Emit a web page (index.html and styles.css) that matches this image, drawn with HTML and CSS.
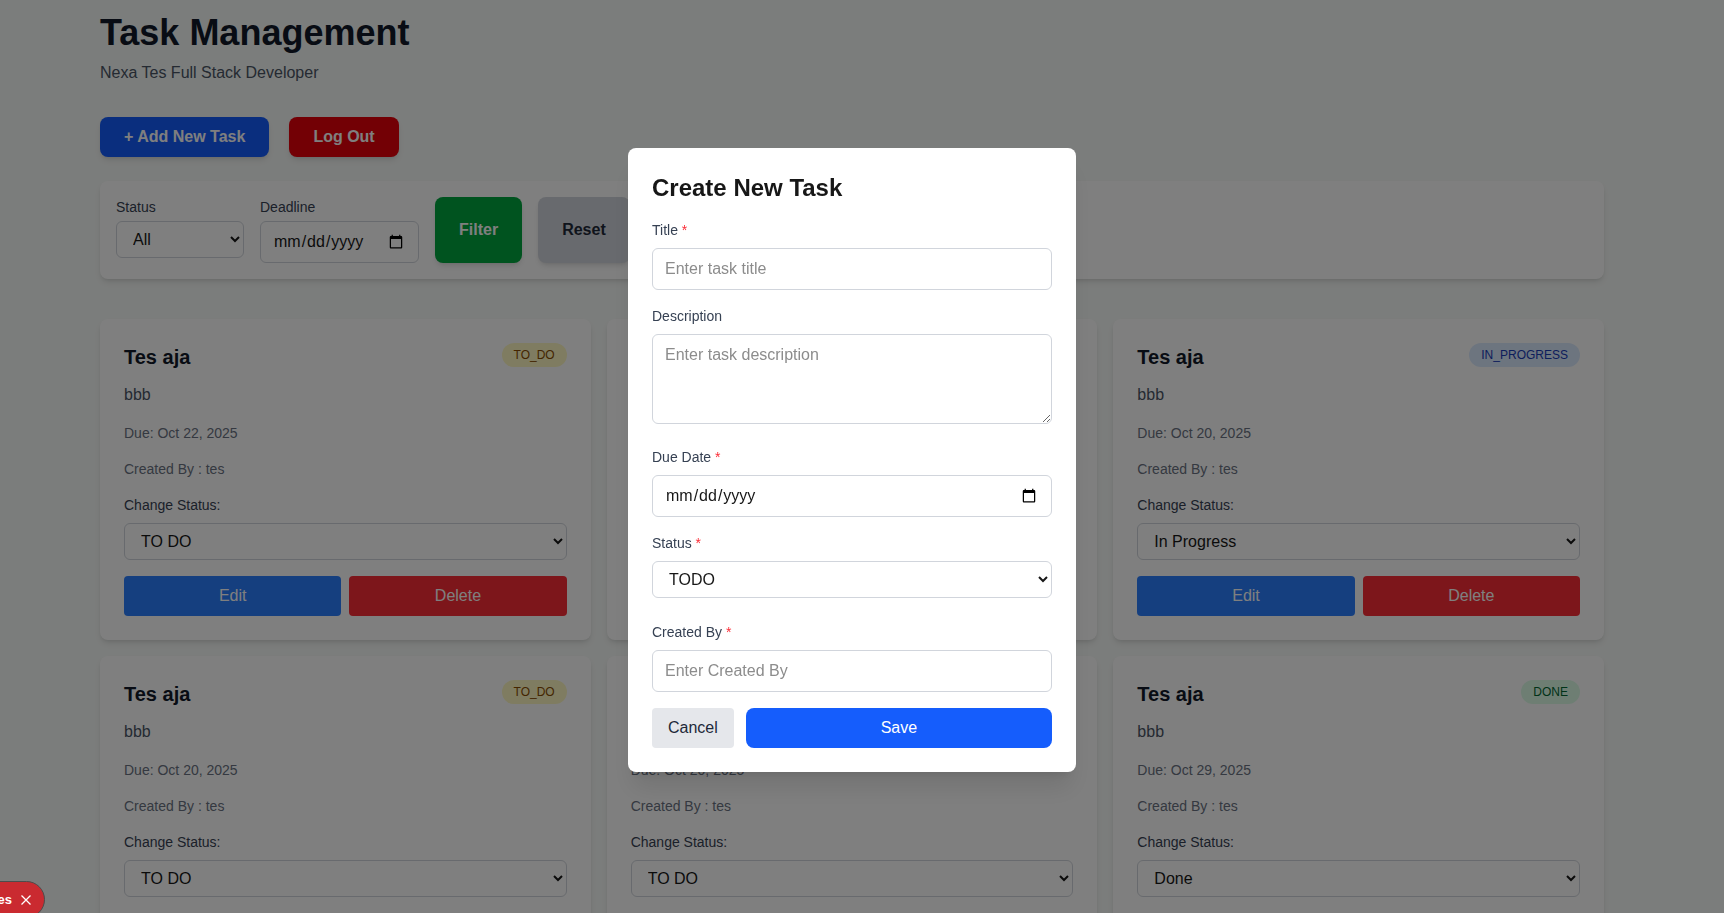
FILE: index.html
```html
<!DOCTYPE html>
<html lang="en">
<head>
<meta charset="utf-8">
<title>Task Management</title>
<link rel="stylesheet" href="styles.css">
</head>
<body>
<div class="page">
  <main class="container">
    <h1 class="page-title">Task Management</h1>
    <p class="page-subtitle">Nexa Tes Full Stack Developer</p>
    <div class="toolbar">
      <button type="button" class="btn btn-primary">+ Add New Task</button>
      <button type="button" class="btn btn-danger">Log Out</button>
    </div>
    <form class="filters">
      <div class="filter-field">
        <label for="f-status">Status</label>
        <select id="f-status" class="control select filter-select"><option>All</option><option>TO DO</option><option>In Progress</option><option>Done</option></select>
      </div>
      <div class="filter-field">
        <label for="f-deadline">Deadline</label>
        <input id="f-deadline" class="control filter-date" type="date">
      </div>
      <button type="button" class="btn btn-success">Filter</button>
      <button type="button" class="btn btn-neutral">Reset</button>
    </form>
    <section class="cards">
      <article class="card">
        <div class="card-head"><h2>Tes aja</h2><span class="badge badge-todo">TO_DO</span></div>
        <p class="card-text">bbb</p>
        <p class="card-meta">Due: Oct 22, 2025</p>
        <p class="card-meta">Created By : tes</p>
        <label class="card-label" for="s1">Change Status:</label>
        <select id="s1" class="control select"><option>TO DO</option><option>In Progress</option><option>Done</option></select>
        <div class="card-actions"><button type="button" class="action edit">Edit</button><button type="button" class="action delete">Delete</button></div>
      </article>
      <article class="card">
        <div class="card-head"><h2>Tes aja</h2><span class="badge badge-todo">TO_DO</span></div>
        <p class="card-text">bbb</p>
        <p class="card-meta">Due: Oct 20, 2025</p>
        <p class="card-meta">Created By : tes</p>
        <label class="card-label" for="s2">Change Status:</label>
        <select id="s2" class="control select"><option>TO DO</option><option>In Progress</option><option>Done</option></select>
        <div class="card-actions"><button type="button" class="action edit">Edit</button><button type="button" class="action delete">Delete</button></div>
      </article>
      <article class="card">
        <div class="card-head"><h2>Tes aja</h2><span class="badge badge-progress">IN_PROGRESS</span></div>
        <p class="card-text">bbb</p>
        <p class="card-meta">Due: Oct 20, 2025</p>
        <p class="card-meta">Created By : tes</p>
        <label class="card-label" for="s3">Change Status:</label>
        <select id="s3" class="control select"><option>TO DO</option><option selected>In Progress</option><option>Done</option></select>
        <div class="card-actions"><button type="button" class="action edit">Edit</button><button type="button" class="action delete">Delete</button></div>
      </article>
      <article class="card">
        <div class="card-head"><h2>Tes aja</h2><span class="badge badge-todo">TO_DO</span></div>
        <p class="card-text">bbb</p>
        <p class="card-meta">Due: Oct 20, 2025</p>
        <p class="card-meta">Created By : tes</p>
        <label class="card-label" for="s4">Change Status:</label>
        <select id="s4" class="control select"><option>TO DO</option><option>In Progress</option><option>Done</option></select>
        <div class="card-actions"><button type="button" class="action edit">Edit</button><button type="button" class="action delete">Delete</button></div>
      </article>
      <article class="card">
        <div class="card-head"><h2>Tes aja</h2><span class="badge badge-todo">TO_DO</span></div>
        <p class="card-text">bbb</p>
        <p class="card-meta">Due: Oct 20, 2025</p>
        <p class="card-meta">Created By : tes</p>
        <label class="card-label" for="s5">Change Status:</label>
        <select id="s5" class="control select"><option>TO DO</option><option>In Progress</option><option>Done</option></select>
        <div class="card-actions"><button type="button" class="action edit">Edit</button><button type="button" class="action delete">Delete</button></div>
      </article>
      <article class="card">
        <div class="card-head"><h2>Tes aja</h2><span class="badge badge-done">DONE</span></div>
        <p class="card-text">bbb</p>
        <p class="card-meta">Due: Oct 29, 2025</p>
        <p class="card-meta">Created By : tes</p>
        <label class="card-label" for="s6">Change Status:</label>
        <select id="s6" class="control select"><option>TO DO</option><option>In Progress</option><option selected>Done</option></select>
        <div class="card-actions"><button type="button" class="action edit">Edit</button><button type="button" class="action delete">Delete</button></div>
      </article>
    </section>
  </main>
</div>

<div class="overlay">
  <form class="modal" role="dialog" aria-labelledby="modal-title">
    <h2 id="modal-title" class="modal-title">Create New Task</h2>
    <div class="field">
      <label for="m-title">Title <span class="required">*</span></label>
      <input id="m-title" class="control" type="text" placeholder="Enter task title">
    </div>
    <div class="field">
      <label for="m-desc">Description</label>
      <textarea id="m-desc" class="control area" rows="3" placeholder="Enter task description"></textarea>
    </div>
    <div class="field">
      <label for="m-due">Due Date <span class="required">*</span></label>
      <input id="m-due" class="control" type="date">
    </div>
    <div class="field field-loose">
      <label for="m-status">Status <span class="required">*</span></label>
      <select id="m-status" class="control select"><option>TODO</option><option>IN PROGRESS</option><option>DONE</option></select>
    </div>
    <div class="field">
      <label for="m-by">Created By <span class="required">*</span></label>
      <input id="m-by" class="control" type="text" placeholder="Enter Created By">
    </div>
    <div class="modal-actions">
      <button type="button" class="cancel">Cancel</button>
      <button type="button" class="save">Save</button>
    </div>
  </form>
</div>

<div class="issues">
  <span>1 Issues</span>
  <button type="button" class="issues-close" aria-label="Close">
    <svg width="12" height="12" viewBox="0 0 12 12" fill="none" stroke="currentColor" stroke-width="1.3"><path d="M1.5 1.5l9 9M10.500 1.500l-9 9"/></svg>
  </button>
</div>
</body>
</html>
```
FILE: styles.css
```css
*, *::before, *::after { box-sizing: border-box; margin: 0; }
html, body { height: 100%; }
body {
  overflow: hidden;
  background: #f7faf8;
  color: #171717;
  font: 16px/24px Arial, "Liberation Sans", Helvetica, sans-serif;
}
button, input, select, textarea { font: inherit; color: inherit; }
button { border: 0; cursor: pointer; }

.page { height: 100%; overflow: hidden; padding-right: 20px; }
.container { max-width: 1536px; margin: 0 auto; padding: 13px 16px; }
.page-title { color: #101828; font-size: 36px; line-height: 40px; margin-bottom: 8px; }
.page-subtitle { color: #4a5565; }

.toolbar { display: flex; gap: 20px; margin: 32px 0 24px; }
.btn {
  padding: 8px 24px;
  border-radius: 8px;
  color: #fff;
  font-weight: 700;
  box-shadow: 0 4px 6px -1px rgba(0, 0, 0, .1), 0 2px 4px -2px rgba(0, 0, 0, .1);
}
.btn-primary { background: #155dfc; }
.btn-danger { background: #e7000b; }
.btn-success { background: #00a63e; }
.btn-neutral { background: #d1d5dc; color: #1e2939; }

.filters {
  display: flex;
  gap: 16px;
  padding: 16px;
  margin-bottom: 40px;
  background: #fff;
  border-radius: 8px;
  box-shadow: 0 4px 6px -1px rgba(0, 0, 0, .1), 0 2px 4px -2px rgba(0, 0, 0, .1);
}
.filters label { display: block; margin-bottom: 4px; font-size: 14px; line-height: 20px; color: #364153; }

.control {
  display: block;
  width: 100%;
  padding: 8px 12px;
  border: 1px solid #d1d5dc;
  border-radius: 6px;
  background: #fff;
}
input.control { height: 42px; }
.select { height: 37px; }
.filters .filter-select { width: 128px; }
.filters .filter-date { width: 159px; }
.control::placeholder { color: #8c8c8c; }

.cards { display: grid; grid-template-columns: repeat(3, 1fr); gap: 16px; }
.card {
  padding: 24px;
  background: #fff;
  border-radius: 8px;
  box-shadow: 0 4px 6px -1px rgba(0, 0, 0, .1), 0 2px 4px -2px rgba(0, 0, 0, .1);
}
.card-head { display: flex; justify-content: space-between; align-items: flex-start; margin-bottom: 12px; }
.card-head h2 { font-size: 20px; line-height: 28px; color: #101828; }
.badge { padding: 4px 12px; border-radius: 12px; font-size: 12px; line-height: 16px; }
.badge-todo { background: #fef9c2; color: #894b00; }
.badge-progress { background: #dbeafe; color: #193cb8; }
.badge-done { background: #dcfce7; color: #016630; }
.card-text { color: #4a5565; margin-bottom: 16px; }
.card-meta { font-size: 14px; line-height: 20px; color: #6a7282; margin-bottom: 16px; }
.card-label { display: block; font-size: 14px; line-height: 20px; color: #364153; margin-bottom: 8px; }
.card-actions { display: flex; gap: 8px; margin-top: 16px; }
.action { flex: 1; padding: 8px 16px; border-radius: 4px; color: #fff; }
.edit { background: #2b7fff; }
.delete { background: #fb2c36; }

.overlay {
  position: fixed;
  inset: 0;
  display: flex;
  align-items: center;
  justify-content: center;
  padding: 0 20px 0 0;
  background: rgba(0, 0, 0, .5);
}
.modal {
  width: 448px;
  padding: 24px;
  margin-top: 6px;
  background: #fff;
  border-radius: 8px;
  box-shadow: 0 20px 25px -5px rgba(0, 0, 0, .1), 0 8px 10px -6px rgba(0, 0, 0, .1);
}
.modal-title { font-size: 24px; line-height: 32px; margin-bottom: 16px; }
.field { margin-bottom: 16px; }
.field-loose { margin-bottom: 24px; }
.field label { display: block; margin-bottom: 8px; font-size: 14px; line-height: 20px; color: #364153; }
.required { color: #fb2c36; }
.area { display: inline-block; resize: vertical; }
.modal-actions { display: flex; gap: 12px; }
.cancel { padding: 8px 16px; border-radius: 4px; background: #e5e7eb; color: #1e2939; }
.save { flex: 1; padding: 8px 16px; border-radius: 8px; background: #155dfc; color: #fff; }

/* Dev issue indicator, partly dragged off the corner */
.issues {
  position: fixed;
  left: -60px;
  bottom: -5px;
  display: flex;
  align-items: center;
  justify-content: flex-end;
  gap: 5px;
  width: 105px;
  height: 37px;
  padding-right: 9px;
  border: 1px solid #4c4c4c;
  border-radius: 19px;
  background: #ca2a30;
  color: #fff;
  font-size: 13px;
  font-weight: 700;
}
.issues-close { display: grid; place-items: center; width: 18px; height: 18px; padding: 0; background: none; }
```
